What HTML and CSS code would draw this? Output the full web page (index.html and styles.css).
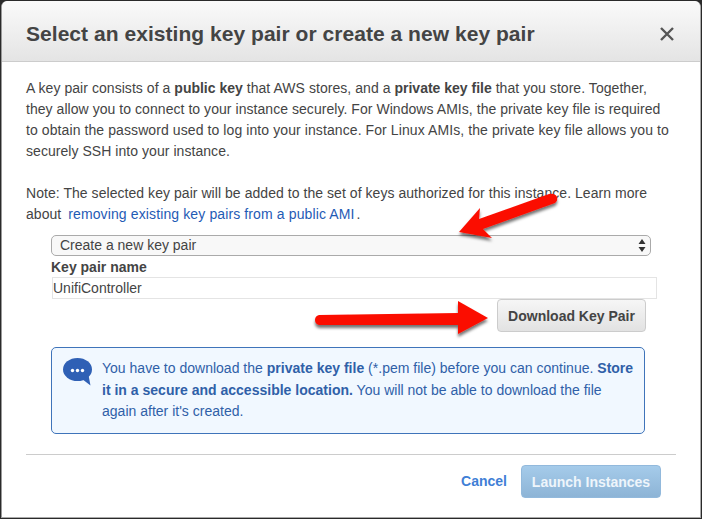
FILE: index.html
```html
<!DOCTYPE html>
<html lang="en">
<head>
<meta charset="utf-8">
<title>Select an existing key pair</title>
<link rel="stylesheet" href="styles.css">
</head>
<body>
<div class="modal">
  <header class="modal-header">
    <h2 class="modal-title">Select an existing key pair or create a new key pair</h2>
    <svg class="close" width="16" height="16" viewBox="0 0 16 16"><path d="M2 2 L14 14 M14 2 L2 14" stroke="#555" stroke-width="2.400" fill="none"/></svg>
  </header>
  <div class="modal-body">
    <p class="intro">A key pair consists of a <b>public key</b> that AWS stores, and a <b>private key file</b> that you store. Together, they allow you to connect to your instance securely. For Windows AMIs, the private key file is required <span class="wide">to obtain the password used to log into your instance. For Linux AMIs, the private key file allows you to</span> securely SSH into your instance.</p>
    <p class="note">Note: The selected key pair will be added to the set of keys authorized for this instance. Learn more about <a class="link" href="#">removing existing key pairs from a public AMI</a> .</p>
    <div class="form">
      <div class="select">
        <span>Create a new key pair</span>
        <svg class="caret" width="8" height="13" viewBox="0 0 8 13"><path d="M4 0 L7.500 5 H0.500 Z M4 13 L7.500 8 H0.500 Z" fill="#333"/></svg>
      </div>
      <div class="field-label">Key pair name</div>
      <div class="input">UnifiController</div>
      <div class="download-row"><button class="btn-download">Download Key Pair</button></div>
    </div>
    <div class="alert">
      <svg class="alert-icon" width="31" height="28" viewBox="0 0 31 28">
        <ellipse cx="14.500" cy="11.500" rx="14.500" ry="11.500" fill="#2f60b5"/>
        <path d="M19 21 L27.500 27.500 L25.500 17 Z" fill="#2f60b5"/>
        <circle cx="9.500" cy="12.500" r="1.700" fill="#fff"/><circle cx="14.500" cy="12.500" r="1.700" fill="#fff"/><circle cx="19.500" cy="12.500" r="1.700" fill="#fff"/>
      </svg>
      <p class="alert-text">You have to download the <b>private key file</b> (*.pem file) before you can continue. <b>Store it in a secure and accessible location.</b> You will not be able to download the file again after it's created.</p>
    </div>
  </div>
  <footer class="modal-footer">
    <a class="cancel" href="#">Cancel</a>
    <button class="btn-launch">Launch Instances</button>
  </footer>
</div>
<svg class="arrows" width="702" height="519" viewBox="0 0 702 519">
  <defs><filter id="sh" x="-20%" y="-30%" width="140%" height="170%"><feDropShadow dx="0" dy="3" stdDeviation="1.800" flood-color="#000" flood-opacity="0.55"/></filter></defs>
  <g filter="url(#sh)" fill="#fb1000">
    <path d="M459 232 L480 208 L479 219 L549 194 Q555 193 557 197 Q558 201 555 203 L483 229 L492 238 Z"/>
    <path d="M488 318 L458 301 L458 313 L319 315 Q315 316 315 320 Q315 324 319 325 L458 325 L458 334 Z"/>
  </g>
</svg>
</body>
</html>
```
FILE: styles.css
```css
html, body {
  margin: 0;
  padding: 0;
  background: #2a2a2a;
}
body {
  width: 702px;
  height: 519px;
  overflow: hidden;
  position: relative;
  font-family: "Liberation Sans", Arial, sans-serif;
  color: #444;
  font-size: 14px;
  line-height: 21px;
}
.modal {
  box-sizing: border-box;
  width: 700px;
  height: 517px;
  margin: 1px 0 0 1px;
  background: #fff;
  border-radius: 6px 6px 0 0;
  border-left: 1px solid #999;
  border-right: 1px solid #aaa;
  border-bottom: 1px solid #aaa;
  display: flex;
  flex-direction: column;
}
.modal-header {
  box-sizing: border-box;
  height: 61px;
  flex: none;
  padding: 6px 24px 0;
  display: flex;
  align-items: center;
  justify-content: space-between;
  background: linear-gradient(#fafafa, #e4e4e4);
  border-bottom: 1px solid #ccc;
  border-radius: 6px 6px 0 0;
}
.modal-title {
  margin: 0;
  font-size: 21px;
  line-height: 28px;
  font-weight: 700;
  letter-spacing: 0.04px;
  color: #444;
}
.close {
  margin-right: 1px;
}
.modal-body {
  flex: 1;
  padding: 16px 24px 0;
  letter-spacing: 0.05px;
}
.intro {
  margin: 0;
  padding-right: 4px;
}
.intro b {
  letter-spacing: 0;
}
.wide {
  letter-spacing: 0.09px;
}
.note {
  margin: 21px 0 0;
}
.link {
  color: #1f5bb5;
  text-decoration: none;
  margin: 0 -2px 0 3px;
  letter-spacing: 0.12px;
}
.form {
  margin: 10px 0 0 25px;
  width: 606px;
  letter-spacing: 0;
}
.select {
  box-sizing: border-box;
  width: 600px;
  height: 21px;
  border: 1px solid #aaa;
  border-radius: 5px;
  background: #f8f8f8;
  display: flex;
  align-items: center;
  justify-content: space-between;
  padding: 0 4px 0 8px;
  line-height: 19px;
}
.field-label {
  font-weight: 700;
  line-height: 20px;
  padding-top: 1px;
}
.input {
  box-sizing: border-box;
  height: 22px;
  margin-left: 1px;
  width: 605px;
  border: 1px solid #e4e4e4;
  line-height: 20px;
}
.download-row {
  display: flex;
  justify-content: flex-end;
  padding-right: 11px;
}
.btn-download {
  width: 149px;
  height: 33px;
  border: 1px solid #ccc;
  border-radius: 4px;
  background: linear-gradient(#f6f6f6, #e2e2e2);
  font: 700 14px "Liberation Sans", Arial, sans-serif;
  color: #444;
  padding: 0;
}
.alert {
  box-sizing: border-box;
  margin: 15px 0 0 25px;
  width: 594px;
  height: 87px;
  display: flex;
  gap: 8px;
  padding: 10px 8px 0 11px;
  background: #f1f8ff;
  border: 1px solid #3f74ba;
  border-radius: 5px;
  color: #2f60a8;
  letter-spacing: 0.01px;
}
.alert-icon {
  flex: none;
}
.alert-text {
  margin: 0;
  line-height: 21.500px;
}
.modal-footer {
  box-sizing: border-box;
  margin: 0 24px;
  height: 63px;
  flex: none;
  border-top: 1px solid #ccc;
  display: flex;
  align-items: flex-start;
  justify-content: flex-end;
  gap: 14px;
  padding: 10px 15px 0 0;
}
.cancel {
  color: #3f7fd6;
  font-weight: 700;
  text-decoration: none;
  line-height: 33px;
}
.btn-launch {
  width: 140px;
  height: 33px;
  border: 1px solid #92b9dc;
  border-radius: 4px;
  background: linear-gradient(#a5cbea, #8db4d6);
  color: #eef5fb;
  font: 700 14px "Liberation Sans", Arial, sans-serif;
  padding: 0;
}
.arrows {
  position: absolute;
  left: 0;
  top: 0;
  pointer-events: none;
}
```
